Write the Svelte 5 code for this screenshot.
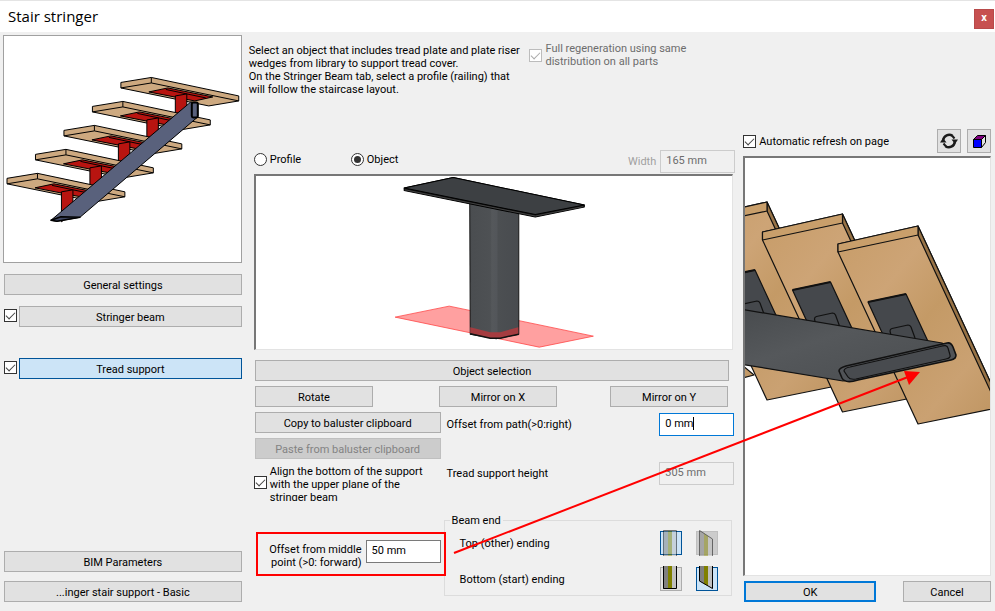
<script>
  let pages = $state({ stringer: true, support: true });
  let autoRefresh = $state(true);
  let alignBottom = $state(true);
  let kind = $state('object');
  let pathOffset = $state('0 mm');
  let middleOffset = $state('50 mm');

  const steps = [0, 1, 2, 3, 4];
  const plates = [0, 1, 2];
</script>

{#snippet ending(cut, side)}
  <svg class="profile" viewBox="0 0 22 26" aria-hidden="true">
    {#if side === 'top'}
      <path d={cut ? 'M3.500 0L8 3V26H3z' : 'M3 0H8V26H3z'} fill="#808080" />
      <path d={cut ? 'M8 3L12 6V26H8z' : 'M8 0H12V26H8z'} fill="#808000" />
      <path d={cut ? 'M12 6L16 9V26H12z' : 'M12 0H16V26H12z'} fill="#c0c0c0" />
      <path d={cut ? 'M3.500 26V.5L16.500 9V26' : 'M3.500 26V.5H16.500V26'} fill="none" stroke="#000" />
    {:else}
      <path d={cut ? 'M3 0H8V18L3 15z' : 'M3 0H8V23H3z'} fill="#808080" />
      <path d={cut ? 'M8 0H12V20L8 18z' : 'M8 0H12V23H8z'} fill="#808000" />
      <path d={cut ? 'M12 0H16V23L12 20z' : 'M12 0H16V23H12z'} fill="#c0c0c0" />
      <path d={cut ? 'M3.500 0V15L16.500 22.500V0' : 'M3.500 0V22.500H16.500V0'} fill="none" stroke="#000" />
    {/if}
  </svg>
{/snippet}

<div class="dialog">
  <header>
    <h1>Stair stringer</h1>
    <button class="close" aria-label="Close">x</button>
  </header>

  <div class="columns">
    <nav>
      <div class="thumb">
        <svg viewBox="4 36 237 226" aria-hidden="true" stroke="#000" stroke-width="1" stroke-linejoin="round">
          {#each steps as i}
            <g transform="translate({-28.5 * i} {24 * i})">
              <path d="M121 82.500L151.500 77.500L239 96V101L209 106L121 88z" fill="#cda980" />
              <path d="M121 88L151.500 83L239 101M151.500 77.500V83" fill="none" />
              <path d="M149 92L168 88L213 97L195 101z" fill="#b81410" />
              <path d="M166 89.500L206 98" fill="none" />
              <path d="M175.500 96L187 94V118L175.500 126z" fill="#b81410" />
            </g>
          {/each}
          <path d="M51 220.500L191 102L198 103V117L80 217.500L57 221.500z" fill="#59617c" />
          <path d="M51 220.500L61 217L80 217.500L57 221.500z" fill="#3e4661" stroke-width="1.500" />
          <rect x="192" y="102.500" width="6" height="15" rx="1.500" fill="#59617c" stroke-width="2" />
        </svg>
      </div>
      <button class="btn first">General settings</button>
      <div class="page">
        <input type="checkbox" aria-label="Enable stringer beam" bind:checked={pages.stringer} />
        <button class="btn">Stringer beam</button>
      </div>
      <div class="page spaced">
        <input type="checkbox" aria-label="Enable tread support" bind:checked={pages.support} />
        <button class="btn active">Tread support</button>
      </div>
      <button class="btn bottom">BIM Parameters</button>
      <button class="btn last">...inger stair support - Basic</button>
    </nav>

    <main>
      <div class="intro">
        <p>
          Select an object that includes tread plate and plate riser<br />
          wedges from library to support tread cover.<br />
          On the Stringer Beam tab, select a profile (railing) that<br />
          will follow the staircase layout.
        </p>
        <label class="check off">
          <input type="checkbox" checked disabled />
          <span>Full regeneration using same<br />distribution on all parts</span>
        </label>
      </div>

      <div class="kinds">
        <label class="radio"><input type="radio" name="kind" value="profile" bind:group={kind} />Profile</label>
        <label class="radio"><input type="radio" name="kind" value="object" bind:group={kind} />Object</label>
        <label class="width" for="width">Width</label>
        <input id="width" class="field" type="text" value="165 mm" disabled />
      </div>

      <div class="view">
        <svg viewBox="256 176 476 173" aria-hidden="true" stroke-linejoin="round">
          <defs>
            <linearGradient id="steel" x1="0" x2="1" y1="0" y2="0">
              <stop offset="0" stop-color="#4a4d50" />
              <stop offset=".42" stop-color="#4e5154" />
              <stop offset=".45" stop-color="#55585b" />
              <stop offset=".55" stop-color="#53565a" />
              <stop offset=".58" stop-color="#4c4f52" />
              <stop offset="1" stop-color="#484b4f" />
            </linearGradient>
          </defs>
          <path d="M395 317L449 306L593 336L539 347z" fill="#ffa0a0" stroke="#ff4848" stroke-width=".8" />
          <path d="M469.500 200L518.500 210V334L496 338.500L470 334z" fill="url(#steel)" stroke="#151515" />
          <path d="M470 327L490 332H500L518 327V334L500 338H490L470 333z" fill="#a53c40" />
          <path d="M470 333.500L490 338H500L518.500 334" fill="none" stroke="#111" stroke-width="1.500" />
          <path d="M404 188L453 177.500L584 205V207L535 217L404 190.500z" fill="#111" stroke="#000" />
          <path d="M404 188L453 177.500L584 205L535 214.500z" fill="#3d4043" stroke="#000" />
          <path d="M405 189.800L535 216L583 206.500" fill="none" stroke="#777" stroke-width=".5" />
        </svg>
      </div>

      <button class="btn select">Object selection</button>
      <div class="turns">
        <button class="btn">Rotate</button>
        <button class="btn">Mirror on X</button>
        <button class="btn">Mirror on Y</button>
      </div>

      <div class="details">
        <div class="left">
          <button class="btn">Copy to baluster clipboard</button>
          <button class="btn" disabled>Paste from baluster clipboard</button>
          <label class="check align">
            <input type="checkbox" bind:checked={alignBottom} />
            <span>Align the bottom of the support<br />with the upper plane of the<br />stringer beam</span>
          </label>
          <div class="marked">
            <label for="middle">Offset from middle<br />point (&gt;0: forward)</label>
            <input id="middle" class="field" type="text" bind:value={middleOffset} />
          </div>
        </div>
        <div class="right">
          <div class="row">
            <label for="path">Offset from path(&gt;0:right)</label>
            <span class="focusbox">
              <input id="path" class="field current" type="text" bind:value={pathOffset} />
              <i class="caret"></i>
            </span>
          </div>
          <div class="row">
            <label for="height">Tread support height</label>
            <input id="height" class="field" type="text" value="305 mm" disabled />
          </div>
          <fieldset>
            <legend>Beam end</legend>
            <div class="ends">
              <span>Top (other) ending</span>
              <button class="end chosen" disabled aria-label="Top ending straight">{@render ending(false, 'top')}</button>
              <button class="end" disabled aria-label="Top ending cut">{@render ending(true, 'top')}</button>
            </div>
            <div class="ends">
              <span>Bottom (start) ending</span>
              <button class="end" aria-label="Bottom ending straight">{@render ending(false, 'bottom')}</button>
              <button class="end chosen" aria-label="Bottom ending cut">{@render ending(true, 'bottom')}</button>
            </div>
          </fieldset>
        </div>
      </div>
    </main>

    <aside>
      <div class="tools">
        <label class="check"><input type="checkbox" bind:checked={autoRefresh} /><span>Automatic refresh on page</span></label>
        <button class="tool" aria-label="Refresh">
          <svg width="18" height="16" viewBox="0 0 18 16" aria-hidden="true">
            <path d="M3.200 7A6 6 0 0 1 12.500 2.800M14.800 9A6 6 0 0 1 5.500 13.200" fill="none" stroke="#1a1a1a" stroke-width="2.400" />
            <path d="M0 9.500L3 5L6.500 9.500zM18 6.500L15 11L11.500 6.500z" fill="#1a1a1a" />
            <path d="M12 2.500L14.500 5.500M6 13.500L3.500 10.500" fill="none" stroke="#1a1a1a" stroke-width="2" />
          </svg>
        </button>
        <button class="tool" aria-label="3D view">
          <svg width="13" height="13" viewBox="0 0 13 13" aria-hidden="true" stroke="#000" stroke-linejoin="round">
            <path d="M.5 4.500L4.500 .5H12.500L8.500 4.500z" fill="#800080" />
            <path d="M8.500 4.500L12.500 .5V7.500L8.500 12.500z" fill="#e1e1e1" />
            <path d="M.5 4.500H8.500V12.500H.5z" fill="#00f" />
          </svg>
        </button>
      </div>

      <div class="scene">
        <svg viewBox="745 158 245 417" preserveAspectRatio="xMinYMin slice" aria-hidden="true" stroke="#111" stroke-width="1.200" stroke-linejoin="round">
          <defs>
            <linearGradient id="wood" x1="0" y1="0" x2="1" y2="1">
              <stop offset="0" stop-color="#c79c68" />
              <stop offset=".3" stop-color="#cda476" />
              <stop offset=".5" stop-color="#c49a66" />
              <stop offset=".75" stop-color="#caa172" />
              <stop offset="1" stop-color="#bd935f" />
            </linearGradient>
            <linearGradient id="beam" x1="0" y1="0" x2="1" y2="1">
              <stop offset="0" stop-color="#484b4e" />
              <stop offset=".4" stop-color="#55585b" />
              <stop offset="1" stop-color="#494c4f" />
            </linearGradient>
          </defs>
          <path d="M700 330L754 375L743 378z" fill="url(#wood)" />
          {#each plates as i}
            <g transform="translate({-75.500 * (2 - i)} {-12 * (2 - i)})">
              <path d="M838 244L918 226L1002 407L918 424L838 252z" fill="url(#wood)" />
              <path d="M918 226L1002 407V416L918 235z" fill="#987346" />
              <path d="M838 244L918 226V235L838 252z" fill="#c99f6b" />
              <path d="M868 302L906 294L932 350L890 350z" fill="#45484c" />
              <path d="M868 302L906 294" stroke-width="2" />
              <path d="M892 340L890 331Q890 329 892 328.500L908 325Q910 325 911 327L915 338" fill="none" />
            </g>
          {/each}
          <path d="M740 309L942 343L955 358L860 379L843 381L740 364z" fill="url(#beam)" />
          <path d="M846 366L947 343Q951 342 953 347L956 355Q956 359 951 360L858 380Q845 384 842 378L839 371Q839 368 846 366z" fill="#505357" stroke-width="1.600" />
          <path d="M850 367L940 346.500Q947 344 948 348L950 355Q951 358 946 359L856 379Q850 380 848 377L844 371Q844 368 850 367z" fill="#484b4f" />
        </svg>
      </div>

      <div class="actions">
        <button class="btn ok">OK</button>
        <button class="btn cancel">Cancel</button>
      </div>
    </aside>
  </div>

  <svg class="pointer" viewBox="0 0 995 611" preserveAspectRatio="none" aria-hidden="true">
    <path d="M454 553L908 377" stroke="#f00" stroke-width="2" />
    <path d="M920 372L904 371L909 385z" fill="#f00" />
  </svg>
</div>

<style>
  :global(body) {
    margin: 0;
    background: #f0f0f0;
  }
  .dialog {
    position: relative;
    display: flex;
    flex-direction: column;
    min-height: 100vh;
    box-sizing: border-box;
    background: #f0f0f0;
    color: #000;
    font: 11px/13px Roboto, 'Liberation Sans', sans-serif;
  }
  button, input {
    box-sizing: border-box;
    margin: 0;
    font: inherit;
    color: inherit;
  }
  header {
    display: flex;
    align-items: center;
    justify-content: space-between;
    height: 32px;
    padding: 0 1px 0 8px;
    box-sizing: border-box;
    border-top: 1px solid #e4e4e4;
    background: #fff;
  }
  h1 {
    margin: 0;
    padding-bottom: 2px;
    font: 15px/20px 'Open Sans', sans-serif;
  }
  .close {
    width: 20px;
    height: 20px;
    margin-top: 4px;
    padding: 0 0 2px;
    border: 1px solid #b84a4a;
    background: #c75050;
    color: #fff;
    font-weight: 700;
  }
  .columns {
    flex: 1;
    display: grid;
    grid-template-columns: 239fr 486fr 248fr;
    gap: 8px;
    padding: 3px 4px 9px 3px;
  }
  nav, main, aside, .left, .right {
    display: flex;
    flex-direction: column;
    min-width: 0;
  }
  .thumb {
    border: 1px solid #a0a0a0;
    background: #fff;
  }
  svg {
    display: block;
  }
  .thumb svg, .view svg {
    width: 100%;
  }
  .btn {
    height: 21px;
    padding: 2px 4px 0;
    border: 1px solid #adadad;
    background: #e1e1e1;
    white-space: nowrap;
  }
  .btn:disabled {
    border-color: #bfbfbf;
    background: #ccc;
    color: #838383;
  }
  .btn.active {
    border-color: #005499;
    background: #cce4f7;
  }
  nav > .btn {
    margin-left: 1px;
  }
  nav > .first {
    margin-top: 11px;
  }
  .page {
    display: flex;
    gap: 2px;
    margin: 11px 0 0 1px;
  }
  .page input {
    margin-top: 3px;
  }
  .page .btn {
    flex: 1;
  }
  .spaced {
    margin-top: 31px;
  }
  nav > .bottom {
    margin-top: auto;
  }
  nav > .last {
    margin-top: 9px;
  }
  input[type='checkbox'], input[type='radio'] {
    appearance: none;
    position: relative;
    flex: none;
    width: 13px;
    height: 13px;
    border: 1px solid #333;
    background: #fff;
  }
  input[type='checkbox']:checked::after {
    content: '';
    position: absolute;
    left: 1px;
    top: 2px;
    width: 9px;
    height: 5px;
    box-sizing: border-box;
    border: solid #444;
    border-width: 0 0 1px 1px;
    transform: rotate(-45deg);
  }
  input[type='checkbox']:disabled {
    border-color: #bcbcbc;
  }
  input[type='checkbox']:disabled::after {
    border-color: #aaa;
  }
  input[type='radio'] {
    border-radius: 50%;
  }
  input[type='radio']:checked::after {
    content: '';
    position: absolute;
    inset: 2px;
    border-radius: 50%;
    background: #333;
  }
  .intro {
    display: grid;
    grid-template-columns: 280fr 206fr;
    height: 115px;
    padding-top: 7px;
    box-sizing: border-box;
  }
  p {
    margin: 2px 0 0 -1px;
    white-space: nowrap;
  }
  .check {
    display: flex;
    align-items: center;
    gap: 3px;
    white-space: nowrap;
  }
  .off {
    align-self: flex-start;
    color: #6d6d6d;
  }
  .kinds {
    display: flex;
    align-items: center;
    margin-left: 4px;
  }
  .radio {
    display: flex;
    align-items: center;
    gap: 3px;
    width: 97px;
    margin-bottom: 5px;
  }
  .width {
    margin-left: auto;
    padding-right: 4px;
    color: #a0a0a0;
  }
  .field {
    width: 75px;
    height: 23px;
    padding: 0 5px 2px;
    border: 1px solid #7a7a7a;
    border-radius: 0;
    background: #fff;
    outline: none;
  }
  .field:disabled {
    border-color: #ccc;
    background: #f0f0f0;
    color: #6d6d6d;
  }
  .field.current {
    border-color: #0078d7;
  }
  .view {
    margin: 1px 2px 0 4px;
    border: 1px solid #e3e3e3;
    border-top: 2px solid #777;
    border-left: 2px solid #777;
    background: #fff;
  }
  .select {
    margin: 10px 6px 0 5px;
  }
  .turns {
    display: flex;
    justify-content: space-between;
    margin: 5px 7px 0 5px;
  }
  .turns .btn {
    width: 25%;
  }
  .turns .btn:nth-child(2) {
    margin-left: 13px;
  }
  .details {
    display: grid;
    grid-template-columns: 186fr 288fr;
    column-gap: 6px;
    margin: 5px 1px 0 5px;
  }
  .left {
    gap: 5px;
  }
  .align {
    height: 36px;
    margin-left: -1px;
    padding-top: 1px;
    overflow: hidden;
    align-items: flex-start;
  }
  .align input {
    margin-top: 11px;
  }
  .marked {
    position: relative;
    display: flex;
    align-items: flex-start;
    justify-content: flex-end;
    gap: 4px;
    margin: 26px -5px 0 1px;
    padding: 6px 3px 5px;
    border: 2px solid #f00;
    text-align: right;
    white-space: nowrap;
  }
  .marked label {
    padding-top: 3px;
  }
  .row {
    display: flex;
    align-items: center;
    justify-content: space-between;
    margin: 1px 0 25px;
  }
  .focusbox {
    position: relative;
  }
  .focusbox input {
    display: block;
  }
  .caret {
    position: absolute;
    left: 34px;
    top: 4px;
    width: 1px;
    height: 13px;
    background: #000;
  }
  fieldset {
    min-width: 0;
    margin: 4px 2px 0 -3px;
    padding: 4px 13px 4px 15px;
    border: 1px solid #dcdcdc;
  }
  legend {
    margin-left: -10px;
    padding: 0 2px;
  }
  .ends {
    display: flex;
    align-items: center;
    gap: 14px;
  }
  .ends + .ends {
    margin-top: 12px;
  }
  .ends span {
    flex: 1;
  }
  .end {
    width: 22px;
    height: 24px;
    padding: 0;
    border: 1px solid #adadad;
    background: #e1e1e1;
  }
  .end.chosen {
    border-color: #005499;
    background: #cce4f7;
  }
  .end:disabled:not(.chosen) {
    border-color: #bfbfbf;
    background: #ccc;
  }
  .profile {
    width: 22px;
    height: 26px;
    margin: -2px -1px;
  }
  .end:disabled .profile {
    opacity: 0.5;
  }
  .tools {
    display: flex;
    align-items: center;
    gap: 6px;
    margin-top: 94px;
  }
  .tools .check {
    flex: 1;
  }
  .tool {
    display: grid;
    place-items: center;
    width: 24px;
    height: 24px;
    padding: 0;
    border: 1px solid #adadad;
    background: #e1e1e1;
  }
  .scene {
    flex: 1;
    position: relative;
    margin-top: 3px;
    border: 1px solid #e3e3e3;
    border-top: 2px solid #777;
    border-left: 2px solid #777;
    background: #fff;
    overflow: hidden;
  }
  .scene svg {
    position: absolute;
    width: 100%;
    height: 100%;
  }
  .actions {
    display: flex;
    justify-content: space-between;
    margin: 5px 0 0 1px;
  }
  .ok {
    width: 132px;
    padding-top: 1px;
    border: 2px solid #0078d7;
  }
  .cancel {
    width: 88px;
  }
  .pointer {
    position: absolute;
    inset: 0;
    width: 100%;
    height: 100%;
    pointer-events: none;
  }
</style>
